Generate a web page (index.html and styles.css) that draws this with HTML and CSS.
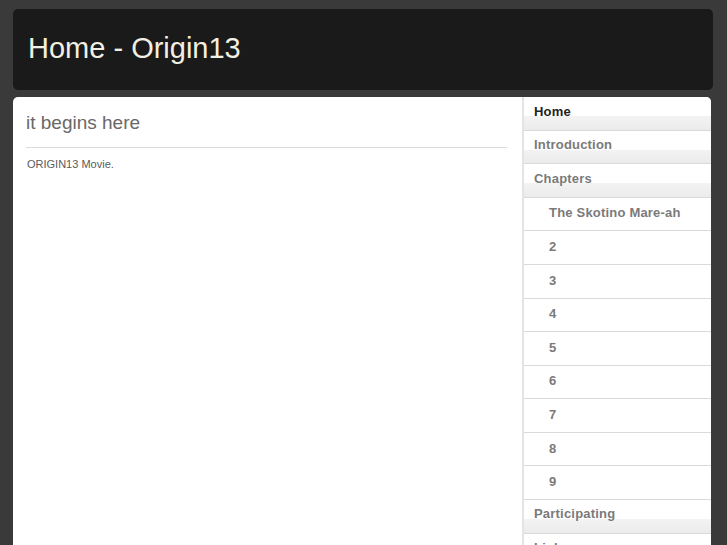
FILE: index.html
```html
<!DOCTYPE html>
<html>
<head>
<meta charset="utf-8">
<title>Home - Origin13</title>
<link rel="stylesheet" href="styles.css">
</head>
<body>
<header class="site-header">
  <h1 class="site-title">Home - Origin13</h1>
</header>
<div class="panel">
  <main class="main">
    <h2 class="page-title">it begins here</h2>
    <hr class="rule">
    <p class="page-text">ORIGIN13 Movie.</p>
  </main>
  <nav class="sidebar">
    <ul class="menu">
      <li class="item top current">Home</li>
      <li class="item top">Introduction</li>
      <li class="item top">Chapters</li>
      <li class="item sub">The Skotino Mare-ah</li>
      <li class="item sub">2</li>
      <li class="item sub">3</li>
      <li class="item sub">4</li>
      <li class="item sub">5</li>
      <li class="item sub">6</li>
      <li class="item sub">7</li>
      <li class="item sub">8</li>
      <li class="item sub">9</li>
      <li class="item top">Participating</li>
      <li class="item top">Links</li>
    </ul>
  </nav>
</div>
</body>
</html>
```
FILE: styles.css
```css
html, body {
  margin: 0;
  padding: 0;
  height: 100%;
}
body {
  background: #3a3a3a;
  padding: 9px 14px 0 13px;
  box-sizing: border-box;
  font-family: "Liberation Sans", Arial, sans-serif;
  overflow: hidden;
}
.site-header {
  width: 700px;
  height: 81px;
  background: #1a1a1a;
  border-radius: 5px;
  padding: 0 15px;
  box-sizing: border-box;
}
.site-title {
  margin: 0;
  font-weight: normal;
  font-size: 29px;
  line-height: 79px;
  color: #f2f0e2;
}
.panel {
  margin-top: 7px;
  width: 698px;
  height: 460px;
  background: #fff;
  border-radius: 5px 5px 0 0;
  display: flex;
  overflow: hidden;
}
.main {
  flex: 1;
  padding: 14px 15px 0 13px;
}
.page-title {
  margin: 0;
  font-weight: normal;
  font-size: 19px;
  line-height: 24px;
  color: #686868;
}
.rule {
  margin: 12px 0 0;
  border: 0;
  border-top: 1px solid #dcdcdc;
  height: 0;
}
.page-text {
  margin: 9px 0 0 1px;
  font-size: 11px;
  line-height: 14px;
  color: #5a5a5a;
}
.sidebar {
  width: 187px;
  border-left: 2px solid #e4e4e4;
}
.menu {
  list-style: none;
  margin: 0;
  padding: 0;
}
.item {
  font-size: 13px;
  letter-spacing: 0.2px;
  font-weight: bold;
  line-height: 16px;
  color: #7a7a7a;
  border-bottom: 1px solid #dadada;
}
.top {
  padding: 6.5px 10px 10.1px;
  background: linear-gradient(to bottom, #fff 0, #fff 19px, #f3f3f3 19px, #ebebeb 100%);
}
.current {
  color: #222;
}
.sub {
  padding: 7.7px 10px 8.9px 25px;
  background: #fff;
}
```
